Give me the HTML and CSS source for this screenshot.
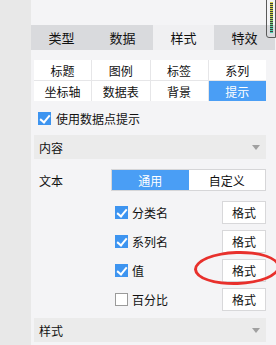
FILE: index.html
```html
<!DOCTYPE html>
<html lang="zh-CN">
<head>
  <meta charset="UTF-8" />
  <title>图表属性</title>
  <link rel="stylesheet" href="styles.css">
</head>
<body>
  <div class="side"></div>
  <div class="main">
    <div class="meter"></div>
    <div class="tabs">
      <div class="tab">类型</div>
      <div class="tab">数据</div>
      <div class="tab active">样式</div>
      <div class="tab">特效</div>
    </div>

    <div class="content">
      <div class="subtabs">
        <div class="subtab">标题</div>
        <div class="subtab">图例</div>
        <div class="subtab">标签</div>
        <div class="subtab">系列</div>
        <div class="subtab">坐标轴</div>
        <div class="subtab">数据表</div>
        <div class="subtab">背景</div>
        <div class="subtab active">提示</div>
      </div>

      <label class="check-row">
        <span class="box checked"></span>使用数据点提示
      </label>

      <div class="section">内容<span class="arrow"></span></div>

      <div class="text-row">
        <span class="label">文本</span>
        <div class="segmented">
          <div class="seg active">通用</div>
          <div class="seg">自定义</div>
        </div>
      </div>

      <div class="items">
        <div class="item">
          <span class="box checked"></span><span class="name">分类名</span>
          <button class="btn">格式</button>
        </div>
        <div class="item">
          <span class="box checked"></span><span class="name">系列名</span>
          <button class="btn">格式</button>
        </div>
        <div class="item">
          <span class="box checked"></span><span class="name">值</span>
          <button class="btn">格式</button>
          <div class="circle"></div>
        </div>
        <div class="item">
          <span class="box"></span><span class="name">百分比</span>
          <button class="btn">格式</button>
        </div>
      </div>

      <div class="section">样式<span class="arrow"></span></div>
    </div>
  </div>
</body>
</html>
```

FILE: styles.css
```css
* {
  box-sizing: border-box;
}

body {
  margin: 0;
  width: 276px;
  height: 345px;
  overflow: hidden;
  display: flex;
  background: #f4f4f6;
  font-family: "Noto Sans CJK SC", "Microsoft YaHei", sans-serif;
  font-size: 12px;
  color: #111;
}

.side {
  width: 31px;
  background: #e8e8e8;
}

.main {
  flex: 1;
  position: relative;
}

.meter {
  position: absolute;
  top: -3px;
  right: 0;
  width: 10px;
  height: 41px;
  border-radius: 3px 0 0 3px;
  background:
    repeating-linear-gradient(to bottom, transparent 0 1px, #3e3e3e 1px 2px),
    linear-gradient(to bottom, #d9d24a 0%, #c8d445 45%, #4fd1a0 75%, #3fc9b8 100%);
  background-clip: content-box;
  padding: 4px 2px 4px 3px;
  background-color: #3e3e3e;
  border: 1px solid #5a5a5a;
  z-index: 2;
}

.tabs {
  margin-top: 25px;
  display: flex;
  width: 244px;
  height: 25px;
}

.tab {
  flex: 1;
  display: flex;
  align-items: center;
  justify-content: center;
  background: #d9dadd;
  font-size: 13px;
}

.tab.active {
  background: #f0f0f2;
}

.content {
  padding: 0 10px 0 3px;
}

.subtabs {
  margin-top: 10px;
  display: grid;
  grid-template-columns: repeat(4, 1fr);
  grid-auto-rows: 20px;
  gap: 1px;
  background: #e6e6e8;
}

.subtab {
  display: flex;
  align-items: center;
  justify-content: center;
  background: #fff;
}

.subtab.active {
  background: #4a9ef5;
  color: #fff;
}

.check-row {
  margin-top: 7px;
  height: 20px;
  display: flex;
  align-items: center;
  padding-left: 4px;
}

.box {
  width: 13px;
  height: 13px;
  margin-right: 5px;
  border: 1px solid #9a9a9a;
  background: #fff;
  position: relative;
  flex-shrink: 0;
}

.box.checked {
  border-color: #3d94f0;
  background: #3d94f0;
}

.box.checked::after {
  content: "";
  position: absolute;
  left: 3px;
  top: 0px;
  width: 4px;
  height: 8px;
  border: solid #fff;
  border-width: 0 2px 2px 0;
  transform: rotate(40deg);
}

.section {
  margin-top: 7px;
  height: 24px;
  background: #ebebeb;
  display: flex;
  align-items: center;
  justify-content: space-between;
  padding: 0 6px 0 5px;
}

.arrow {
  width: 0;
  height: 0;
  border-left: 4px solid transparent;
  border-right: 4px solid transparent;
  border-top: 5px solid #a0a0a0;
}

.text-row {
  margin-top: 10px;
  display: flex;
  align-items: center;
  height: 22px;
}

.label {
  width: 77px;
  padding-left: 5px;
}

.segmented {
  flex: 1;
  height: 22px;
  display: flex;
  border: 1px solid #d6d6d8;
  background: #fff;
}

.seg {
  flex: 1;
  display: flex;
  align-items: center;
  justify-content: center;
}

.seg.active {
  background: #4a9ef5;
  color: #fff;
}

.items {
  margin-top: 10px;
  display: flex;
  flex-direction: column;
  gap: 6px;
}

.item {
  height: 23px;
  display: flex;
  align-items: center;
  padding-left: 81px;
  position: relative;
}

.name {
  flex: 1;
  margin-left: -1px;
}

.btn {
  width: 44px;
  height: 23px;
  padding: 0;
  border: 1px solid #d8d8da;
  background: #fff;
  font-family: inherit;
  font-size: 12px;
  color: #111;
}

.circle {
  position: absolute;
  left: 160px;
  top: -8px;
  width: 86px;
  height: 34px;
  border: 3px solid #e8302c;
  border-radius: 50%;
  transform: rotate(-2deg);
  pointer-events: none;
}
```
